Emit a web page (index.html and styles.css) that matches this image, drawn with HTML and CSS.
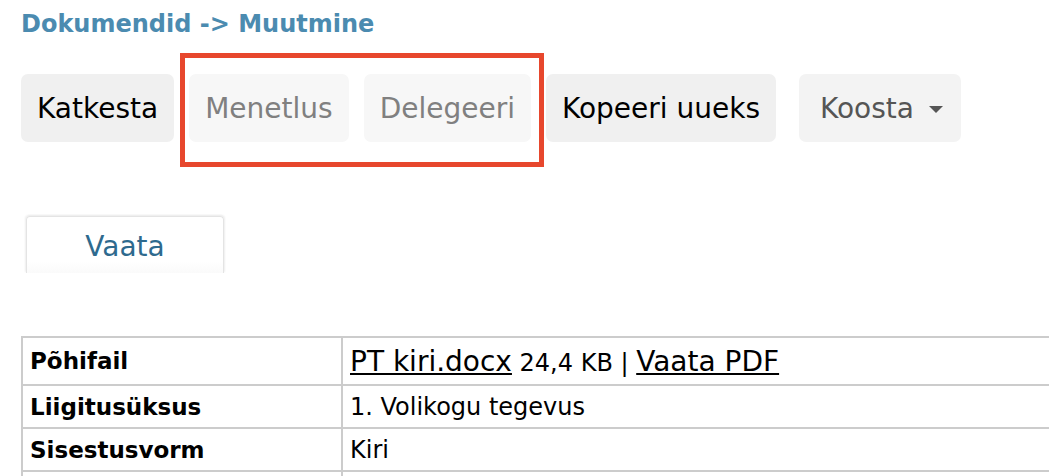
FILE: index.html
```html
<!DOCTYPE html>
<html lang="et">
<head>
    <meta charset="UTF-8">
    <title>Dokumendid - Muutmine</title>
    <link rel="stylesheet" href="styles.css">
</head>
<body>
    <div class="page">
        <h1 class="crumbs">Dokumendid -&gt; Muutmine</h1>

        <!-- Toolbar -->
        <div class="toolbar">
            <button class="btn">Katkesta</button>
            <button class="btn" disabled>Menetlus</button>
            <button class="btn" disabled>Delegeeri</button>
            <button class="btn">Kopeeri uueks</button>
            <button class="btn btn-menu">Koosta <span class="caret"></span></button>
            <div class="highlight"></div>
        </div>

        <!-- Tabs -->
        <ul class="tabs">
            <li class="tab active">Vaata</li>
        </ul>

        <table class="details">
            <tr>
                <th>Põhifail</th>
                <td><a href="#" class="big-link">PT kiri.docx</a> 24,4 KB | <a href="#" class="big-link">Vaata PDF</a></td>
            </tr>
            <tr>
                <th>Liigitusüksus</th>
                <td>1. Volikogu tegevus</td>
            </tr>
            <tr>
                <th>Sisestusvorm</th>
                <td>Kiri</td>
            </tr>
            <tr>
                <th></th>
                <td></td>
            </tr>
        </table>
    </div>
</body>
</html>
```

FILE: styles.css
```css
html {
    overflow: hidden;
}

body {
    margin: 0;
    font-family: "DejaVu Sans", Verdana, sans-serif;
    color: #000;
    background: #fff;
}

.page {
    padding: 10px 0 0 21px;
}

.crumbs {
    margin: 0;
    font-size: 24px;
    font-weight: bold;
    color: #4b8bb0;
    line-height: 28px;
}

.toolbar {
    position: relative;
    display: flex;
    align-items: center;
    margin-top: 36px;
}

.btn {
    font-family: "DejaVu Sans", Verdana, sans-serif;
    font-size: 28px;
    height: 68px;
    padding: 0 16px;
    margin-right: 15px;
    border: none;
    border-radius: 7px;
    background: #f0f0f0;
    color: #000;
    cursor: pointer;
}

.btn:disabled {
    background: #f7f7f7;
    color: #808080;
    cursor: default;
}

.btn-menu {
    margin-left: 8px;
    background: #f3f3f3;
    color: #555;
    padding: 0 18px 0 21px;
}

.caret {
    display: inline-block;
    width: 0;
    height: 0;
    margin-left: 6px;
    vertical-align: middle;
    border-left: 7px solid transparent;
    border-right: 7px solid transparent;
    border-top: 7px solid #555;
}

/* red annotation frame around the disabled buttons */
.highlight {
    position: absolute;
    left: 159px;
    top: -21px;
    width: 354px;
    height: 104px;
    border: 5px solid #e7472d;
}

.tabs {
    list-style: none;
    margin: 74px 0 0 5px;
    padding: 0;
    display: flex;
}

.tab {
    width: 198px;
    height: 57px;
    box-sizing: border-box;
    padding-top: 13px;
    text-align: center;
    font-size: 28px;
    color: #2e6a8e;
    border: 1px solid #e4e4e4;
    border-bottom: none;
    border-radius: 4px 4px 0 0;
    box-shadow: -1px -1px 2px #eee, 1px -1px 2px #eee;
    background: linear-gradient(#fff, #fff 80%, #fafafa);
}

.details {
    margin-top: 63px;
    width: 1100px;
    border-collapse: collapse;
    font-size: 24px;
}

.details th,
.details td {
    border: 2px solid #ccc;
    padding: 0 7px;
    height: 41px;
    text-align: left;
    vertical-align: middle;
}

.details th {
    width: 304px;
    font-weight: bold;
    font-size: 23px;
}

.details tr:first-child th,
.details tr:first-child td {
    height: 46px;
}

.big-link {
    color: #000;
    font-size: 28px;
}
```
